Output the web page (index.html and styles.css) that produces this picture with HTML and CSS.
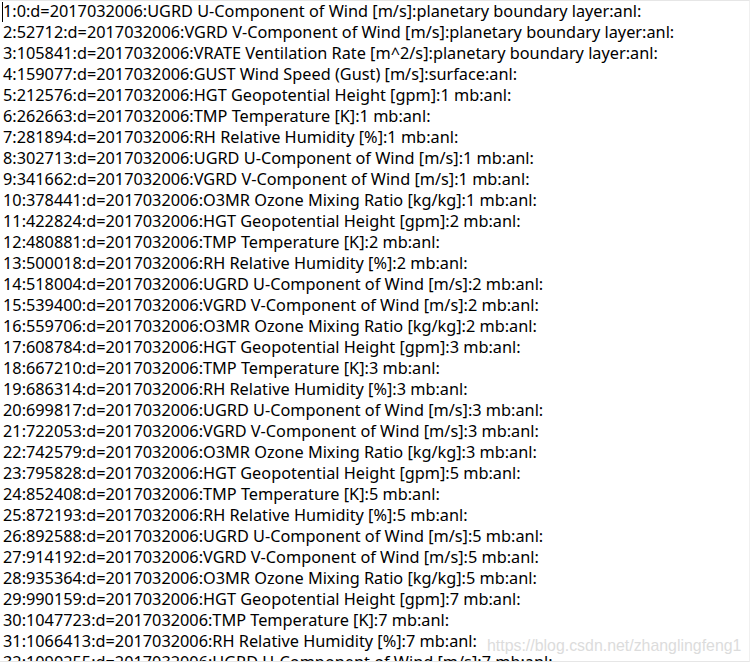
FILE: index.html
```html
<!DOCTYPE html>
<html>
<head>
<meta charset="utf-8">
<link rel="stylesheet" href="styles.css">
</head>
<body>
<div class="doc">
<div class="line first"><span class="caret"></span>1:0:d=2017032006:UGRD U-Component of Wind [m/s]:planetary boundary layer:anl:</div>
<div class="line">2:52712:d=2017032006:VGRD V-Component of Wind [m/s]:planetary boundary layer:anl:</div>
<div class="line">3:105841:d=2017032006:VRATE Ventilation Rate [m^2/s]:planetary boundary layer:anl:</div>
<div class="line">4:159077:d=2017032006:GUST Wind Speed (Gust) [m/s]:surface:anl:</div>
<div class="line">5:212576:d=2017032006:HGT Geopotential Height [gpm]:1 mb:anl:</div>
<div class="line">6:262663:d=2017032006:TMP Temperature [K]:1 mb:anl:</div>
<div class="line">7:281894:d=2017032006:RH Relative Humidity [%]:1 mb:anl:</div>
<div class="line">8:302713:d=2017032006:UGRD U-Component of Wind [m/s]:1 mb:anl:</div>
<div class="line">9:341662:d=2017032006:VGRD V-Component of Wind [m/s]:1 mb:anl:</div>
<div class="line">10:378441:d=2017032006:O3MR Ozone Mixing Ratio [kg/kg]:1 mb:anl:</div>
<div class="line">11:422824:d=2017032006:HGT Geopotential Height [gpm]:2 mb:anl:</div>
<div class="line">12:480881:d=2017032006:TMP Temperature [K]:2 mb:anl:</div>
<div class="line">13:500018:d=2017032006:RH Relative Humidity [%]:2 mb:anl:</div>
<div class="line">14:518004:d=2017032006:UGRD U-Component of Wind [m/s]:2 mb:anl:</div>
<div class="line">15:539400:d=2017032006:VGRD V-Component of Wind [m/s]:2 mb:anl:</div>
<div class="line">16:559706:d=2017032006:O3MR Ozone Mixing Ratio [kg/kg]:2 mb:anl:</div>
<div class="line">17:608784:d=2017032006:HGT Geopotential Height [gpm]:3 mb:anl:</div>
<div class="line">18:667210:d=2017032006:TMP Temperature [K]:3 mb:anl:</div>
<div class="line">19:686314:d=2017032006:RH Relative Humidity [%]:3 mb:anl:</div>
<div class="line">20:699817:d=2017032006:UGRD U-Component of Wind [m/s]:3 mb:anl:</div>
<div class="line">21:722053:d=2017032006:VGRD V-Component of Wind [m/s]:3 mb:anl:</div>
<div class="line">22:742579:d=2017032006:O3MR Ozone Mixing Ratio [kg/kg]:3 mb:anl:</div>
<div class="line">23:795828:d=2017032006:HGT Geopotential Height [gpm]:5 mb:anl:</div>
<div class="line">24:852408:d=2017032006:TMP Temperature [K]:5 mb:anl:</div>
<div class="line">25:872193:d=2017032006:RH Relative Humidity [%]:5 mb:anl:</div>
<div class="line">26:892588:d=2017032006:UGRD U-Component of Wind [m/s]:5 mb:anl:</div>
<div class="line">27:914192:d=2017032006:VGRD V-Component of Wind [m/s]:5 mb:anl:</div>
<div class="line">28:935364:d=2017032006:O3MR Ozone Mixing Ratio [kg/kg]:5 mb:anl:</div>
<div class="line">29:990159:d=2017032006:HGT Geopotential Height [gpm]:7 mb:anl:</div>
<div class="line">30:1047723:d=2017032006:TMP Temperature [K]:7 mb:anl:</div>
<div class="line">31:1066413:d=2017032006:RH Relative Humidity [%]:7 mb:anl:</div>
<div class="line">32:1090255:d=2017032006:UGRD U-Component of Wind [m/s]:7 mb:anl:</div>
<div class="watermark">https://blog.csdn.net/zhanglingfeng1</div>
</div>
</body>
</html>
```
FILE: styles.css
```css
html, body {
  margin: 0;
  padding: 0;
  background: #ffffff;
}
.doc {
  position: relative;
  box-sizing: border-box;
  width: 750px;
  height: 662px;
  overflow: hidden;
  border-top: 1px solid #e6e6e6;
  border-bottom: 1px solid #e6e6e6;
  border-right: 1px solid #f0f0f0;
  padding-left: 3px;
  font-family: "Noto Sans", sans-serif;
  font-size: 16.3px;
  color: #000000;
}
.line {
  height: 21px;
  line-height: 20px;
  white-space: nowrap;
}
.first {
  position: relative;
}
.caret {
  position: absolute;
  left: -1px;
  top: 1px;
  width: 1px;
  height: 20px;
  background: #000000;
}
.watermark {
  position: absolute;
  left: 487px;
  top: 634px;
  font-family: "Liberation Sans", Arial, sans-serif;
  font-size: 15.9px;
  line-height: 21px;
  color: #dcdcdc;
  white-space: nowrap;
}
```
